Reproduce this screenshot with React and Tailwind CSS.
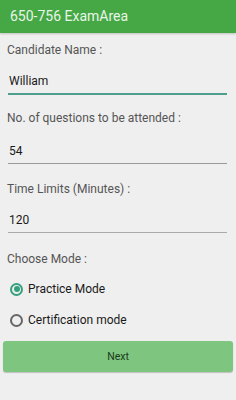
export default function App() {
  return (
    <div className="w-[236px] h-[400px] bg-[#efefef] font-['Roboto',sans-serif] overflow-hidden">
      <div className="h-[33px] bg-[#45a845] flex items-center px-[10px] shadow-[0_1px_2px_rgba(0,0,0,0.2)]">
        <span className="text-[14px] text-[#e8f5e8]">650-756 ExamArea</span>
      </div>
      <div className="flex flex-col px-[8px]">
        <div className="h-[20px] mt-[7px] flex items-center">
          <span className="text-[12px] text-[#555] -ml-[1px]">Candidate Name :</span>
        </div>
        <div className="h-[20px] mt-[11px] flex items-center pl-[1px]">
          <span className="text-[12px] text-[#1a1a1a]">William</span>
        </div>
        <div className="h-[2px] mt-[2px] bg-[#4e9e8c] mr-[1px]"></div>
        <div className="h-[20px] mt-[13px] flex items-center">
          <span className="text-[12px] text-[#555] -ml-[1px]">No. of questions to be attended :</span>
        </div>
        <div className="h-[20px] mt-[13px] flex items-center pl-[1px]">
          <span className="text-[12px] text-[#1a1a1a]">54</span>
        </div>
        <div className="h-[1px] mt-[2px] bg-[#999] mr-[1px]"></div>
        <div className="h-[20px] mt-[15px] flex items-center">
          <span className="text-[12px] text-[#555] -ml-[1px]">Time Limits (Minutes) :</span>
        </div>
        <div className="h-[20px] mt-[11px] flex items-center pl-[1px]">
          <span className="text-[12px] text-[#1a1a1a]">120</span>
        </div>
        <div className="h-[1px] mt-[2px] bg-[#aaa] mr-[1px]"></div>
        <div className="h-[20px] mt-[16px] flex items-center">
          <span className="text-[12px] text-[#555] -ml-[1px]">Choose Mode :</span>
        </div>
        <div className="h-[20px] mt-[10px] flex items-center">
          <span className="w-[13px] h-[13px] rounded-full border-2 border-[#35a07e] flex items-center justify-center ml-[2px]">
            <span className="w-[6px] h-[6px] rounded-full bg-[#35a07e]"></span>
          </span>
          <span className="text-[12px] text-[#1a1a1a] ml-[5px]">Practice Mode</span>
        </div>
        <div className="h-[20px] mt-[11px] flex items-center">
          <span className="w-[13px] h-[13px] rounded-full border-2 border-[#666] ml-[2px]"></span>
          <span className="text-[12px] text-[#1a1a1a] ml-[5px]">Certification mode</span>
        </div>
      </div>
      <div className="px-[3px] mt-[11px]">
        <div className="h-[31px] rounded-[3px] bg-[#7ec57f] shadow-[0_1px_1px_rgba(0,0,0,0.2)] flex items-center justify-center">
          <span className="text-[10.5px] text-[#1a3a1a]">Next</span>
        </div>
      </div>
    </div>
  );
}
